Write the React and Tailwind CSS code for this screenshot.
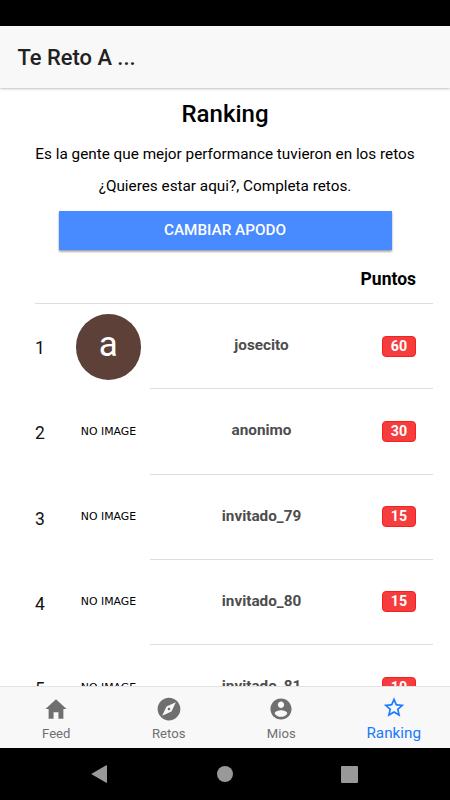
import React from 'react';
import { IoMdHome, IoMdCompass, IoMdContact, IoMdStarOutline } from 'react-icons/io';

const players = [
    { position: 1, name: 'josecito', points: 60, initial: 'a' },
    { position: 2, name: 'anonimo', points: 30 },
    { position: 3, name: 'invitado_79', points: 15 },
    { position: 4, name: 'invitado_80', points: 15 },
    { position: 5, name: 'invitado_81', points: 10 },
];

const tabs = [
    { label: 'Feed', Icon: IoMdHome },
    { label: 'Retos', Icon: IoMdCompass },
    { label: 'Mios', Icon: IoMdContact },
    { label: 'Ranking', Icon: IoMdStarOutline, active: true },
];

const PlayerRow = ({ player }) => {
    return (
        <li className="flex h-[85.3px] shrink-0 pl-[35px]">
            <div className="flex w-[40.5px] items-center pt-[3px] text-[17.5px] text-[#111]">
                {player.position}
            </div>
            <div className="flex w-[74.5px] items-center">
                {player.initial ? (
                    <div className="mt-[1px] flex h-[65.5px] w-[65.5px] items-center justify-center rounded-full bg-[#5d4037] pb-[5px] text-[35px] leading-none text-white">
                        {player.initial}
                    </div>
                ) : (
                    <span className="w-[66px] text-center font-['DejaVu_Sans',sans-serif] text-[10.9px] leading-4 text-black">
                        NO IMAGE
                    </span>
                )}
            </div>
            <div className="mr-[17px] flex flex-1 items-center justify-between border-b border-[#dedede] pr-[17px]">
                <span className="w-[223px] pb-[2px] text-center text-[15.3px] leading-5 font-bold text-[#4d4d4d]">
                    {player.name}
                </span>
                <span className="h-[21px] w-[34px] shrink-0 rounded-[4px] border border-[#f91f1f] bg-[#f53d3d] text-center text-[14.2px] leading-[18px] font-bold text-white">
                    {player.points}
                </span>
            </div>
        </li>
    );
};

const App = () => {
    return (
        <div className="flex h-[800px] w-[450px] flex-col overflow-hidden bg-white font-[Roboto,sans-serif]">
            <div className="h-[26px] shrink-0 bg-black" />

            <header className="z-10 flex h-[62px] shrink-0 items-center bg-[#f8f8f8] pt-[2px] pl-[17.5px] shadow-[0_0_3px_rgba(0,0,0,0.45)]">
                <h1 className="text-[21.9px] leading-7 font-medium text-[#222]">Te Reto A ...</h1>
            </header>

            <main className="flex min-h-0 flex-1 flex-col overflow-hidden text-black">
                <h2 className="mt-[12px] text-center text-[24px] leading-7 font-medium">Ranking</h2>
                <p className="mt-[16px] text-center text-[15.3px] leading-5">
                    Es la gente que mejor performance tuvieron en los retos
                </p>
                <p className="mt-[12px] text-center text-[15.3px] leading-5">
                    ¿Quieres estar aqui?, Completa retos.
                </p>
                <button className="mx-auto mt-[15px] h-[39px] w-[333px] shrink-0 bg-[#488aff] text-[15.3px] leading-[37px] font-medium text-white shadow-[0_2px_2px_rgba(0,0,0,0.25),0_1px_2px_rgba(0,0,0,0.2)]">
                    CAMBIAR APODO
                </button>

                <div className="mr-[17px] ml-[35px] flex h-[54px] shrink-0 items-center justify-end border-b border-[#dedede] pt-[4px] pr-[17px]">
                    <span className="text-[17.5px] leading-6 font-bold">Puntos</span>
                </div>
                <ul className="-mt-[0.1px] flex flex-col">
                    {players.map((player) => (
                        <PlayerRow key={player.position} player={player} />
                    ))}
                </ul>
            </main>

            <nav className="z-10 flex h-[62px] shrink-0 border-t border-[#e2e2e2] bg-[#f8f8f8]">
                {tabs.map(({ label, Icon, active }) => (
                    <a
                        key={label}
                        className={`flex flex-1 flex-col items-center ${active ? 'pt-[7px] text-[15.3px] text-[#1a7aff]' : 'pt-[9px] text-[13.1px] text-[#6f6f6f]'}`}
                    >
                        <Icon className="h-[26px] w-[26px]" />
                        <span className={active ? 'mt-[3px] leading-5' : 'mt-[4px] leading-4'}>{label}</span>
                    </a>
                ))}
            </nav>

            <div className="flex h-[52px] shrink-0 items-center justify-center bg-black pr-[2px] text-[#999]">
                <svg className="h-[20px] w-[17px]" viewBox="0 0 17 20" fill="currentColor">
                    <path d="M15.2 1.3Q16 .8 16 1.8V18.2Q16 19.2 15.2 18.7L1 10.6Q0 10 1 9.4Z" />
                </svg>
                <div className="ml-[109px] h-[16px] w-[16px] rounded-full bg-[#999]" />
                <div className="ml-[108px] h-[17px] w-[17px] rounded-[1px] bg-[#999]" />
            </div>
        </div>
    );
};

export default App;
